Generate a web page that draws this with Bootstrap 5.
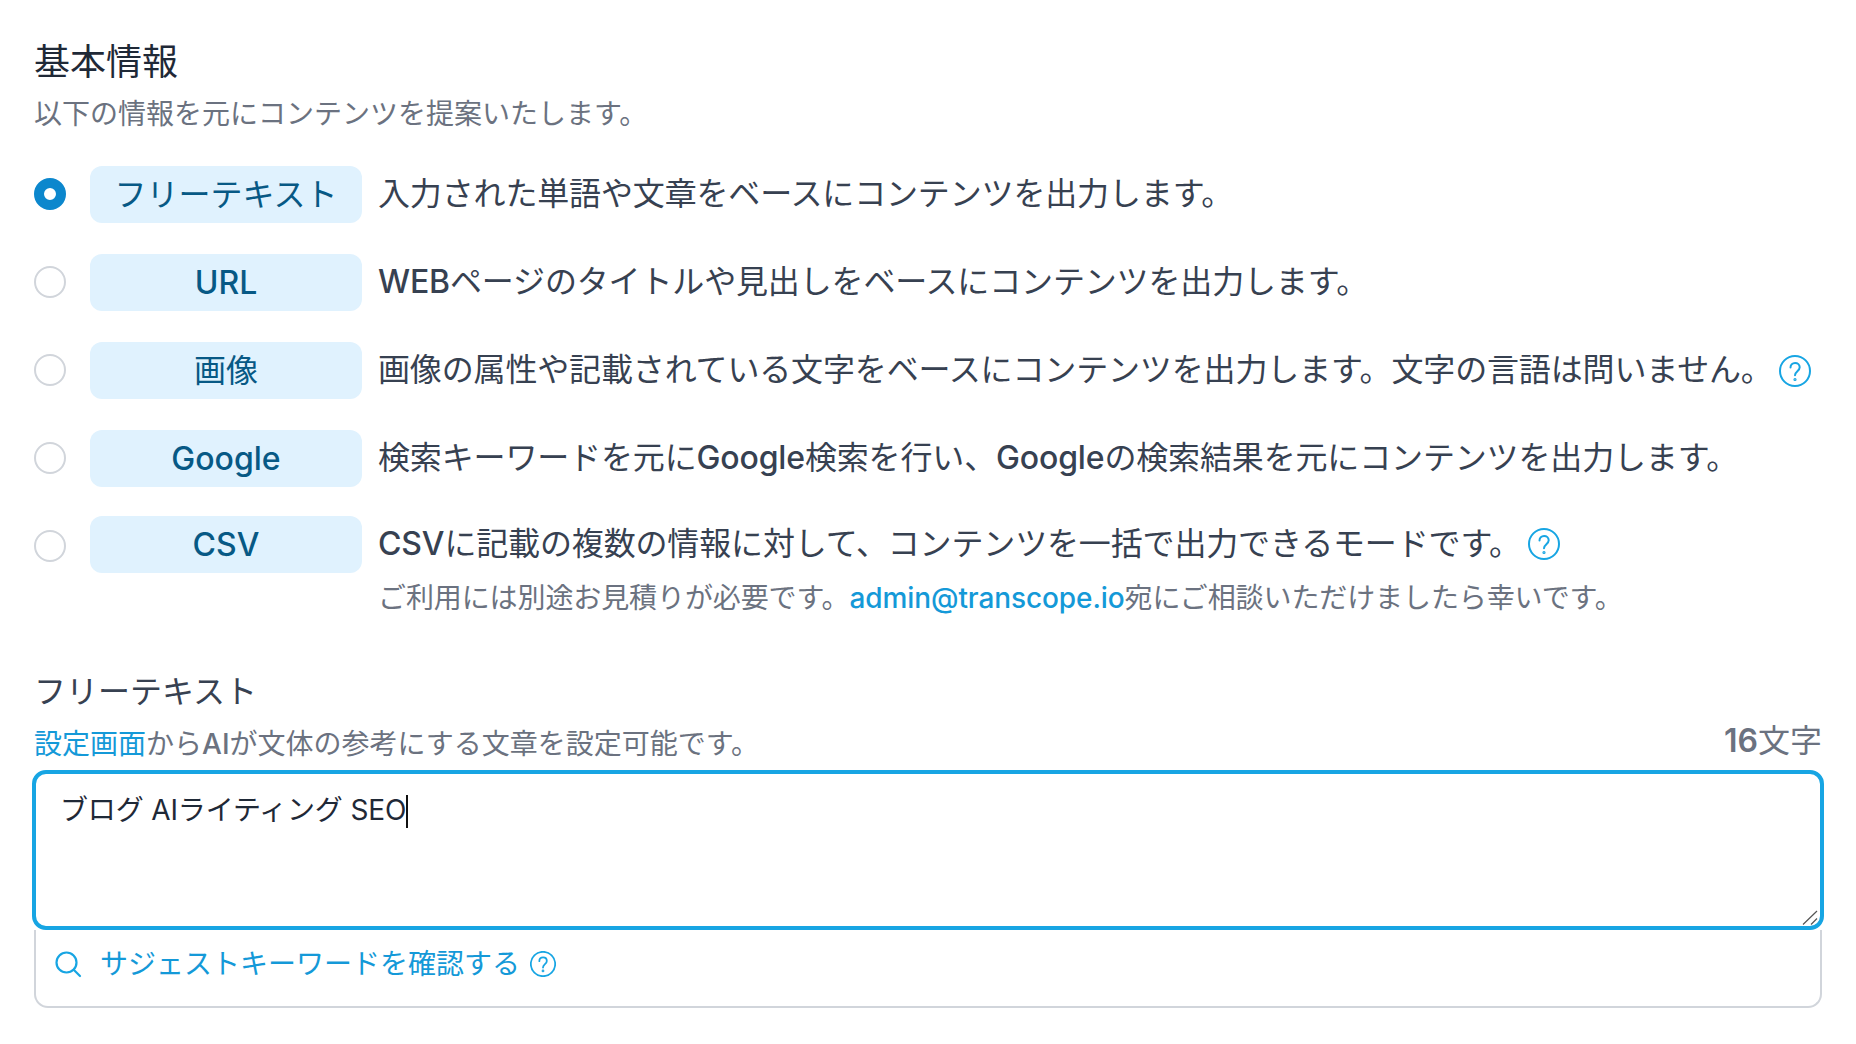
<!DOCTYPE html>
<html lang="ja">
<head>
<meta charset="utf-8">
<title>基本情報</title>
<link href="https://cdn.jsdelivr.net/npm/bootstrap@5.3.0/dist/css/bootstrap.min.css" rel="stylesheet">
<style>
body{font-family:Inter,"Noto Sans CJK JP",sans-serif;background:#fff;color:#374151;font-size:32px;line-height:44px}
.info-page{padding:36px 32px 0}
.info-title{font-size:36px;line-height:52px;font-weight:400;color:#1f2937;margin:0 0 6px 2px}
.info-sub{font-size:28px;line-height:40px;color:#6b7280;margin:0 0 32px 2px}
.mode-row{min-height:57px;margin-bottom:31px}
.mode-row-tight{margin-bottom:29px}
.mode-radio.form-check-input{width:32px;height:32px;margin:-1px 24px 1px 2px;border:2px solid #d1d5db;flex:none;background-image:none}
.mode-radio.form-check-input:checked{background-color:#fff;border:10px solid #0c87cd;background-image:none}
.mode-radio-top.form-check-input{margin-top:14px}
.mode-chip{width:272px;height:57px;margin-right:16px;background:#e0f2fe;color:#075985;border-radius:12px;flex:none}
.latin{font-weight:500}
.mode-text{white-space:nowrap;letter-spacing:-.15px;padding-bottom:2px}
.mode-head{height:55px}
.mode-note{font-size:28px;line-height:40px;color:#6b7280;margin-top:7px;letter-spacing:-.1px}
.accent-link{color:#1499d8;text-decoration:none}
.help-ic{width:32px;height:32px;flex:none;margin-left:6px}
.help-ic-wide{margin-left:7px}
.field-label{font-size:32px;line-height:44px;color:#374151;margin:50px 0 0 2px}
.field-meta{font-size:28px;line-height:40px;color:#6b7280;margin:10px 0 6px 2px}
.field-count{font-size:32px;line-height:40px;margin:-3px 2px 0 0}
.kw-wrap{position:relative}
.kw-input.form-control{display:block;height:160px;padding:15px 24px;font-size:28px;line-height:42px;color:#1f2937;border:4px solid #17a5e3;border-radius:14px;box-shadow:none;caret-color:transparent;resize:none;letter-spacing:-.15px}
.kw-caret{position:absolute;left:374px;top:25px;width:2px;height:33px;background:#111}
.kw-grip{position:absolute;right:6px;bottom:4px;width:16px;height:16px}
.suggest-box{margin:0 2px;height:78px;border:2px solid #d1d5db;border-top:0;border-radius:0 0 14px 14px;padding:0 18px 8px;gap:18px;color:#1499d8;font-size:28px}
.suggest-ic{width:28px;height:28px;flex:none}
.suggest-help{width:26px;height:26px;margin-left:-8px;flex:none}
</style>
</head>
<body>
<main class="info-page">
  <h2 class="info-title">基本情報</h2>
  <p class="info-sub">以下の情報を元にコンテンツを提案いたします。</p>

  <div class="mode-row d-flex align-items-center">
    <input class="form-check-input mode-radio" type="radio" name="mode" checked>
    <span class="mode-chip d-flex align-items-center justify-content-center">フリーテキスト</span>
    <span class="mode-text">入力された単語や文章をベースにコンテンツを出力します。</span>
  </div>
  <div class="mode-row d-flex align-items-center">
    <input class="form-check-input mode-radio" type="radio" name="mode">
    <span class="mode-chip latin d-flex align-items-center justify-content-center">URL</span>
    <span class="mode-text"><span class="latin">WEB</span>ページのタイトルや見出しをベースにコンテンツを出力します。</span>
  </div>
  <div class="mode-row d-flex align-items-center">
    <input class="form-check-input mode-radio" type="radio" name="mode">
    <span class="mode-chip d-flex align-items-center justify-content-center">画像</span>
    <span class="mode-text">画像の属性や記載されている文字をベースにコンテンツを出力します。文字の言語は問いません。</span>
    <svg class="help-ic" viewBox="0 0 32 32" fill="none" stroke="#17a5e3" stroke-width="2" stroke-linecap="round"><circle cx="16" cy="16" r="15"/><path d="M11.5 12.5c0-2.8 2-4.6 4.6-4.6s4.6 1.8 4.6 4.4c0 3.8-4.7 4-4.7 8"/><circle cx="16" cy="24.5" r=".6"/></svg>
  </div>
  <div class="mode-row mode-row-tight d-flex align-items-center">
    <input class="form-check-input mode-radio" type="radio" name="mode">
    <span class="mode-chip latin d-flex align-items-center justify-content-center">Google</span>
    <span class="mode-text">検索キーワードを元に<span class="latin">Google</span>検索を行い、<span class="latin">Google</span>の検索結果を元にコンテンツを出力します。</span>
  </div>
  <div class="d-flex align-items-start">
    <input class="form-check-input mode-radio mode-radio-top" type="radio" name="mode">
    <span class="mode-chip latin d-flex align-items-center justify-content-center">CSV</span>
    <div class="mode-text">
      <div class="d-flex align-items-center mode-head"><span><span class="latin">CSV</span>に記載の複数の情報に対して、コンテンツを一括で出力できるモードです。</span>
        <svg class="help-ic help-ic-wide" viewBox="0 0 32 32" fill="none" stroke="#17a5e3" stroke-width="2" stroke-linecap="round"><circle cx="16" cy="16" r="15"/><path d="M11.5 12.5c0-2.8 2-4.6 4.6-4.6s4.6 1.8 4.6 4.4c0 3.8-4.7 4-4.7 8"/><circle cx="16" cy="24.5" r=".6"/></svg>
      </div>
      <div class="mode-note">ご利用には別途お見積りが必要です。<a class="accent-link latin" href="#">admin@transcope.io</a>宛にご相談いただけましたら幸いです。</div>
    </div>
  </div>

  <div class="field-label">フリーテキスト</div>
  <div class="d-flex justify-content-between align-items-start field-meta">
    <span><a class="accent-link" href="#">設定画面</a>から<span class="latin">AI</span>が文体の参考にする文章を設定可能です。</span>
    <span class="field-count"><span class="fw-semibold">16</span>文字</span>
  </div>
  <div class="kw-wrap">
    <textarea class="form-control kw-input" id="kw">ブログ AIライティング SEO</textarea>
    <span class="kw-caret"></span>
    <svg class="kw-grip" viewBox="0 0 16 16" fill="none" stroke="#555" stroke-width="1.2"><path d="M1 14.5L15 1M9 14.5l6-6"/></svg>
  </div>
  <div class="suggest-box d-flex align-items-center">
    <svg class="suggest-ic" viewBox="0 0 28 28" fill="none" stroke="#17a5e3" stroke-width="2.2" stroke-linecap="round"><circle cx="12.5" cy="12.5" r="10"/><path d="M20 20l6 6"/></svg>
    <span>サジェストキーワードを確認する</span>
    <svg class="suggest-help" viewBox="0 0 32 32" fill="none" stroke="#17a5e3" stroke-width="2.2" stroke-linecap="round"><circle cx="16" cy="16" r="15"/><path d="M11.5 12.5c0-2.8 2-4.6 4.6-4.6s4.6 1.8 4.6 4.4c0 3.8-4.7 4-4.7 8"/><circle cx="16" cy="24.5" r=".6"/></svg>
  </div>
</main>
<script src="https://cdn.jsdelivr.net/npm/bootstrap@5.3.0/dist/js/bootstrap.bundle.min.js"></script>
</body>
</html>
